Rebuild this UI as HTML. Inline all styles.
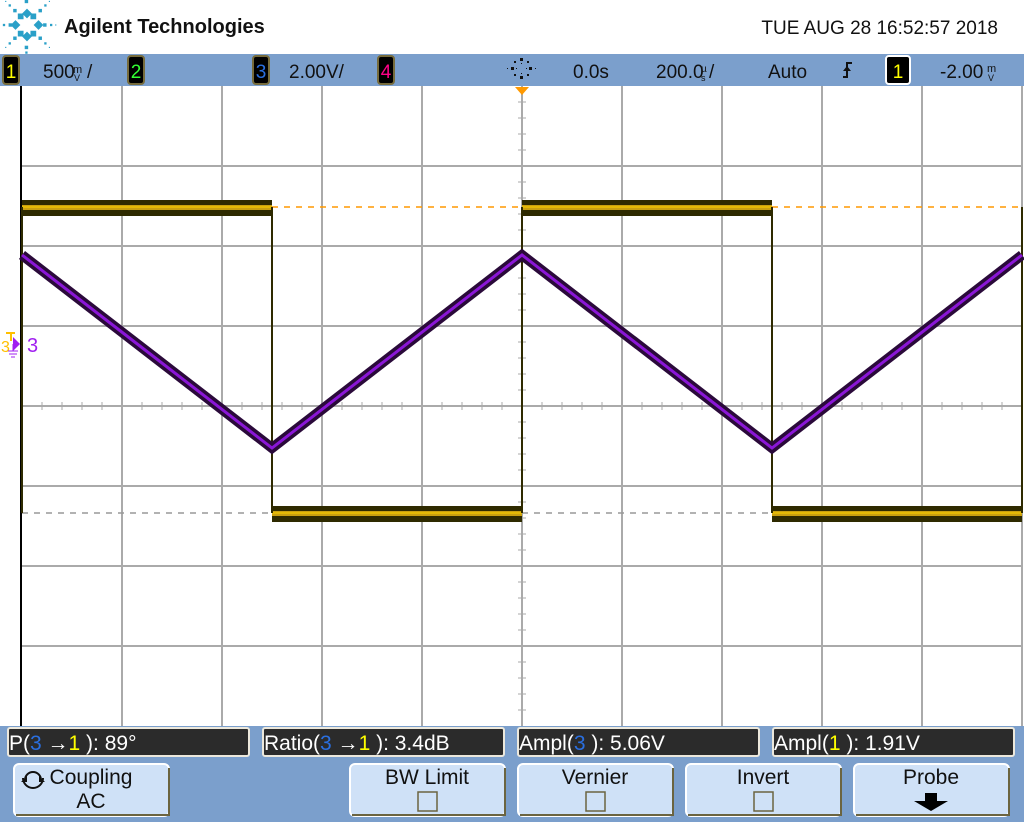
<!DOCTYPE html>
<html><head><meta charset="utf-8"><style>
html,body{margin:0;padding:0;background:#fff;}
svg{display:block;font-family:"Liberation Sans",sans-serif;}
</style></head><body>
<svg width="1024" height="822" viewBox="0 0 1024 822" xmlns="http://www.w3.org/2000/svg">
<rect width="1024" height="822" fill="#fff"/>
<!-- logo -->
<g fill="#2aa0c8" transform="translate(27 25) scale(1.15) translate(-27 -25)">
<rect x="24" y="12" width="6" height="6" transform="rotate(45 27 15)"/>
<rect x="24" y="32" width="6" height="6" transform="rotate(45 27 35)"/>
<rect x="14" y="22" width="6" height="6" transform="rotate(45 17 25)"/>
<rect x="34" y="22" width="6" height="6" transform="rotate(45 37 25)"/>
<rect x="19" y="15" width="5" height="5"/><rect x="30" y="15" width="5" height="5"/>
<rect x="19" y="30" width="5" height="5"/><rect x="30" y="30" width="5" height="5"/>
<rect x="25" y="3" width="3" height="3"/><rect x="25" y="43" width="3" height="3"/>
<rect x="25.5" y="-1" width="2" height="2"/><rect x="25.5" y="48" width="2" height="2"/>
<rect x="11" y="23.5" width="3" height="3"/><rect x="41" y="23.5" width="3" height="3"/>
<rect x="6" y="24" width="2" height="2"/><rect x="47" y="24" width="2" height="2"/>
<rect x="1.5" y="24.5" width="1" height="1"/><rect x="51.5" y="24.5" width="1" height="1"/>
<rect x="15" y="11" width="3" height="3"/><rect x="37" y="11" width="3" height="3"/>
<rect x="15" y="35" width="3" height="3"/><rect x="37" y="35" width="3" height="3"/>
<rect x="11" y="7" width="2" height="2"/><rect x="42" y="7" width="2" height="2"/>
<rect x="11" y="40" width="2" height="2"/><rect x="42" y="40" width="2" height="2"/>
<rect x="8" y="4" width="1" height="1"/><rect x="46" y="4" width="1" height="1"/>
<rect x="8" y="44" width="1" height="1"/><rect x="46" y="44" width="1" height="1"/>
</g>
<text x="64" y="33" font-size="20" font-weight="bold" fill="#111">Agilent Technologies</text>
<text x="998" y="34" font-size="19" fill="#111" text-anchor="end">TUE AUG 28 16:52:57 2018</text>
<!-- top bar -->
<rect x="0" y="54" width="1024" height="32" fill="#7b9fcc"/>
<g font-size="19">
<rect x="3" y="56" width="16" height="28" rx="3" fill="#000" stroke="#776c3c" stroke-width="2"/><text x="11" y="78" fill="#ff0" text-anchor="middle">1</text>
<text x="43" y="78" fill="#111">500</text><text x="73" y="73" font-size="11" fill="#111">m</text><text x="74" y="81" font-size="9" fill="#111">V</text><text x="87" y="78" fill="#111">/</text>
<rect x="128" y="56" width="16" height="28" rx="3" fill="#000" stroke="#776c3c" stroke-width="2"/><text x="136" y="78" fill="#3f3" text-anchor="middle">2</text>
<rect x="253" y="56" width="16" height="28" rx="3" fill="#000" stroke="#776c3c" stroke-width="2"/><text x="261" y="78" fill="#2a6fe0" text-anchor="middle">3</text>
<text x="289" y="78" fill="#111">2.00V/</text>
<rect x="378" y="56" width="16" height="28" rx="3" fill="#000" stroke="#776c3c" stroke-width="2"/><text x="386" y="78" fill="#f08" text-anchor="middle">4</text>
<g fill="#111">
<rect x="520" y="58" width="3" height="3"/><rect x="520" y="76" width="3" height="3"/><rect x="511" y="67" width="3" height="3"/><rect x="529" y="67" width="3" height="3"/>
<rect x="514" y="61" width="2" height="2"/><rect x="527" y="61" width="2" height="2"/><rect x="514" y="74" width="2" height="2"/><rect x="527" y="74" width="2" height="2"/>
<rect x="521" y="63" width="1" height="1"/><rect x="521" y="73" width="1" height="1"/><rect x="516" y="68" width="1" height="1"/><rect x="526" y="68" width="1" height="1"/>
<rect x="507" y="68" width="1" height="1"/><rect x="535" y="68" width="1" height="1"/>
</g>
<text x="573" y="78" fill="#111">0.0s</text>
<text x="656" y="78" fill="#111">200.0</text><text x="701" y="72" font-size="10" fill="#111">µ</text><text x="701" y="81" font-size="9" fill="#111">s</text><text x="709" y="78" fill="#111">/</text>
<text x="768" y="78" fill="#111">Auto</text>
<path d="M843 77h4v-14h5" fill="none" stroke="#111" stroke-width="2"/><path d="M843 71l4-5 4 5z" fill="#111"/>
<rect x="886" y="56" width="24" height="28" rx="3" fill="#000" stroke="#fff" stroke-width="2"/><text x="898" y="78" fill="#ff0" text-anchor="middle">1</text>
<text x="940" y="78" fill="#111">-2.00</text><text x="987" y="72" font-size="11" fill="#111">m</text><text x="988" y="81" font-size="9" fill="#111">V</text>
</g>
<!-- grid -->
<g stroke="#aaa" stroke-width="2">
<line x1="122" y1="86" x2="122" y2="726"/><line x1="222" y1="86" x2="222" y2="726"/><line x1="322" y1="86" x2="322" y2="726"/><line x1="422" y1="86" x2="422" y2="726"/><line x1="522" y1="86" x2="522" y2="726"/><line x1="622" y1="86" x2="622" y2="726"/><line x1="722" y1="86" x2="722" y2="726"/><line x1="822" y1="86" x2="822" y2="726"/><line x1="922" y1="86" x2="922" y2="726"/><line x1="1022" y1="86" x2="1022" y2="726"/>
<line x1="22" y1="166" x2="1022" y2="166"/><line x1="22" y1="246" x2="1022" y2="246"/><line x1="22" y1="326" x2="1022" y2="326"/><line x1="22" y1="406" x2="1022" y2="406"/><line x1="22" y1="486" x2="1022" y2="486"/><line x1="22" y1="566" x2="1022" y2="566"/><line x1="22" y1="646" x2="1022" y2="646"/>
</g>
<line x1="21" y1="86" x2="21" y2="726" stroke="#000" stroke-width="2"/>
<g stroke="#aaa" stroke-width="1">
<path d="M42 402v8M62 402v8M82 402v8M102 402v8M142 402v8M162 402v8M182 402v8M202 402v8M242 402v8M262 402v8M282 402v8M302 402v8M342 402v8M362 402v8M382 402v8M402 402v8M442 402v8M462 402v8M482 402v8M502 402v8M542 402v8M562 402v8M582 402v8M602 402v8M642 402v8M662 402v8M682 402v8M702 402v8M742 402v8M762 402v8M782 402v8M802 402v8M842 402v8M862 402v8M882 402v8M902 402v8M942 402v8M962 402v8M982 402v8M1002 402v8"/>
<path d="M518 102h8M518 118h8M518 134h8M518 150h8M518 182h8M518 198h8M518 214h8M518 230h8M518 262h8M518 278h8M518 294h8M518 310h8M518 342h8M518 358h8M518 374h8M518 390h8M518 422h8M518 438h8M518 454h8M518 470h8M518 502h8M518 518h8M518 534h8M518 550h8M518 582h8M518 598h8M518 614h8M518 630h8M518 662h8M518 678h8M518 694h8M518 710h8"/>
</g>
<path d="M515 87h14l-7 8z" fill="#f90"/>
<line x1="272" y1="207" x2="522" y2="207" stroke="#f90" stroke-width="1.5" stroke-dasharray="6 6"/>
<line x1="772" y1="207" x2="1022" y2="207" stroke="#f90" stroke-width="1.5" stroke-dasharray="6 6"/>
<line x1="22" y1="513" x2="272" y2="513" stroke="#999" stroke-width="1.5" stroke-dasharray="6 6"/>
<line x1="522" y1="513" x2="772" y2="513" stroke="#999" stroke-width="1.5" stroke-dasharray="6 6"/>
<g fill="#2e2a00">
<rect x="22" y="200" width="250" height="16"/><rect x="522" y="200" width="250" height="16"/>
<rect x="272" y="506" width="250" height="16"/><rect x="772" y="506" width="250" height="16"/>
</g>
<g fill="#c9a010">
<rect x="22" y="205" width="250" height="5"/><rect x="522" y="205" width="250" height="5"/>
<rect x="272" y="511" width="250" height="5"/><rect x="772" y="511" width="250" height="5"/>
</g>
<g stroke="#f4c800" stroke-width="1.2"><line x1="22" y1="207" x2="272" y2="207"/><line x1="522" y1="207" x2="772" y2="207"/><line x1="272" y1="513" x2="522" y2="513"/><line x1="772" y1="513" x2="1022" y2="513"/></g>
<g stroke="#2e2a00" stroke-width="2"><line x1="22" y1="207" x2="22" y2="513"/><line x1="272" y1="207" x2="272" y2="513"/><line x1="522" y1="207" x2="522" y2="513"/><line x1="772" y1="207" x2="772" y2="513"/><line x1="1022" y1="207" x2="1022" y2="513"/></g>
<polyline points="22,255 272,448 522,255 772,448 1022,255" fill="none" stroke="#2a0a3a" stroke-width="10"/>
<polyline points="22,255 272,448 522,255 772,448 1022,255" fill="none" stroke="#8a16d6" stroke-width="3"/>
<text x="1" y="352" font-size="16" fill="#ffbf00">3</text>
<path d="M6 333h9M11 333v8" stroke="#ffbf00" stroke-width="2"/>
<path d="M13 337l7 7-7 7z" fill="#a020f0"/>
<path d="M13 344v7M8 351h10M9 354h8M11 357h4" stroke="#a020f0" stroke-width="1"/>
<text x="27" y="352" font-size="20" fill="#a020f0">3</text>
<rect x="0" y="726" width="1024" height="96" fill="#7b9fcc"/>
<g stroke="#ece8dc" stroke-width="2" fill="#2b2b2b">
<rect x="8" y="728" width="241" height="28" rx="2"/><rect x="263" y="728" width="241" height="28" rx="2"/><rect x="518" y="728" width="241" height="28" rx="2"/><rect x="773" y="728" width="241" height="28" rx="2"/>
</g>
<g font-size="21" fill="#fff">
<text x="9" y="750">P(<tspan fill="#2a6fe0">3</tspan> →<tspan fill="#ff0">1</tspan> ): 89°</text>
<text x="264" y="750">Ratio(<tspan fill="#2a6fe0">3</tspan> →<tspan fill="#ff0">1</tspan> ): 3.4dB</text>
<text x="519" y="750">Ampl(<tspan fill="#2a6fe0">3</tspan> ): 5.06V</text>
<text x="774" y="750">Ampl(<tspan fill="#ff0">1</tspan> ): 1.91V</text>
</g>
<g fill="#cfe1f7" stroke="#fff" stroke-width="2">
<rect x="14" y="764" width="155" height="52" rx="5"/><rect x="350" y="764" width="155" height="52" rx="5"/><rect x="518" y="764" width="155" height="52" rx="5"/><rect x="686" y="764" width="155" height="52" rx="5"/><rect x="854" y="764" width="155" height="52" rx="5"/>
</g>
<g fill="none" stroke="#6b6440" stroke-width="2">
<path d="M169 768v47h-153"/><path d="M505 768v47h-153"/><path d="M673 768v47h-153"/><path d="M841 768v47h-153"/><path d="M1009 768v47h-153"/>
</g>
<g font-size="21" fill="#111" text-anchor="middle">
<text x="91" y="784">  Coupling</text><text x="91" y="808">AC</text>
<text x="427" y="784">BW Limit</text>
<text x="595" y="784">Vernier</text>
<text x="763" y="784">Invert</text>
<text x="931" y="784">Probe</text>
</g>
<path d="M23 778a10 10 0 1 0 20 0" fill="none" stroke="#111" stroke-width="2"/>
<path d="M21 782l6-6v6zM45 782l-6-6v6z" fill="#111"/>
<path d="M25 780a8 8 0 0 1 16 0" fill="none" stroke="#111" stroke-width="2"/>
<g fill="#cfe1f7" stroke="#6b6440" stroke-width="1.5">
<rect x="418" y="792" width="19" height="19"/><rect x="586" y="792" width="19" height="19"/><rect x="754" y="792" width="19" height="19"/>
</g>
<path d="M925 793h12v8h11l-17 10-17-10h11z" fill="#000"/>
</svg>
</body></html>
